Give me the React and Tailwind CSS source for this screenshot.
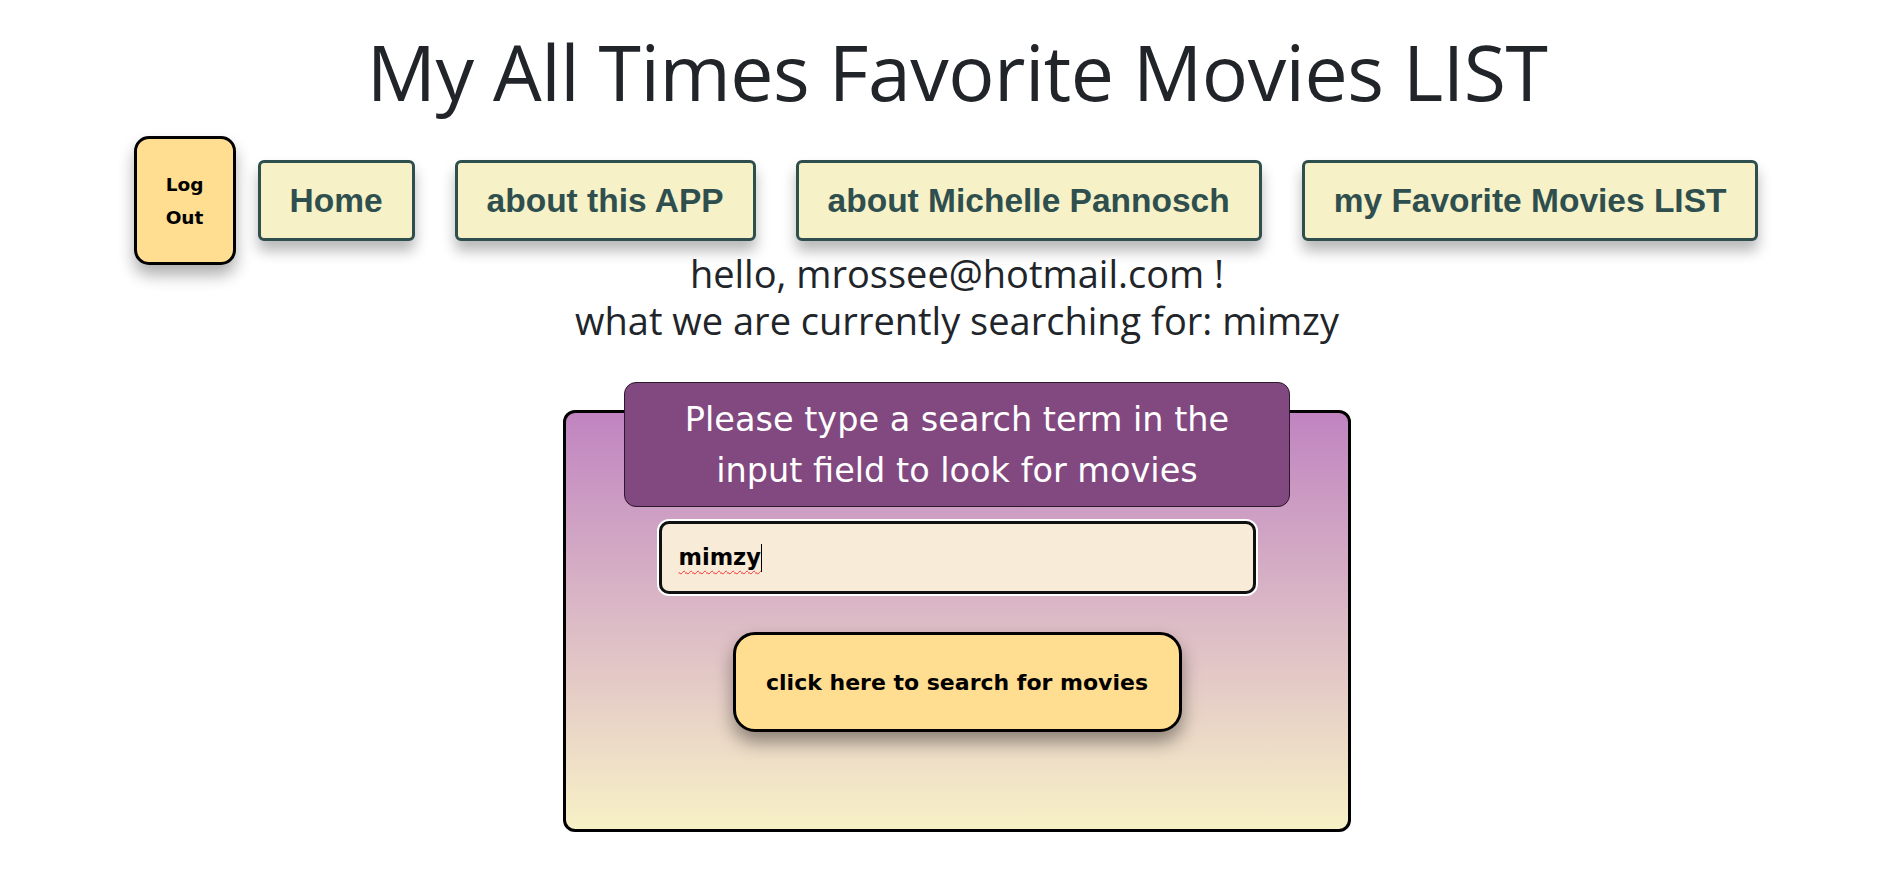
import { useState } from 'react';

const navLinks = ['Home', 'about this APP', 'about Michelle Pannosch', 'my Favorite Movies LIST'];

const App = () => {
  const [term] = useState('mimzy');

  return (
    <div className="bg-white min-h-screen text-[#212529] font-['Open_Sans',sans-serif]">
      {/* titel */}
      <h1 className="pl-[22px] pt-[26px] text-center text-[77px] leading-[1.2] font-medium tracking-[-0.5px]">
        My All Times Favorite Movies LIST
      </h1>

      {/* navigatie */}
      <nav className="mt-[18px] flex items-center justify-center gap-[40px]">
        <button className="-mr-[18px] w-[102px] h-[129px] rounded-[15px] border-[3px] border-black bg-[#ffdd91] shadow-[0_10px_16px_rgba(0,0,0,0.32)] font-['DejaVu_Sans',sans-serif] font-bold text-[18.5px] leading-[33px] text-black">
          Log<br />Out
        </button>
        {navLinks.map((l) => (
          <button
            key={l}
            className="h-[81px] px-[29px] rounded-[6px] border-[3px] border-[#2f4f4f] bg-[#f6f1c7] shadow-[0_10px_14px_rgba(0,0,0,0.28)] font-['Liberation_Sans',sans-serif] font-bold text-[33.5px] text-[#2f4f4f] whitespace-nowrap"
          >
            {l}
          </button>
        ))}
      </nav>

      {/* begroeting */}
      <div className="pl-[22px] text-center text-[38px] leading-[47px] -mt-[15px]">
        <p>hello, mrossee@hotmail.com !</p>
        <p>what we are currently searching for: {term}</p>
      </div>

      {/* zoekvak */}
      <div className="pl-[22px] flex justify-center mt-[66px]">
        <div className="w-[788px] h-[422px] rounded-[12px] border-[3px] border-black bg-gradient-to-b from-[#c084c0] to-[#f7f1c6] flex flex-col items-center">
          <div className="-mt-[31px] w-[666px] h-[125px] rounded-[12px] border border-[#2a1a2a] bg-[#824880] flex items-center justify-center text-center text-white font-['DejaVu_Sans',sans-serif] text-[33.5px] leading-[51px]">
            <p>Please type a search term in the<br />input field to look for movies</p>
          </div>

          <div className="mt-[12px] rounded-[12px] border-2 border-white">
            <div className="w-[597px] h-[73px] rounded-[10px] border-[3px] border-[#111] bg-[#f8ebd7] flex items-center px-[17px]">
              <span className="font-['DejaVu_Sans',sans-serif] font-bold text-[22.5px] text-black underline decoration-wavy decoration-red-500 decoration-1 underline-offset-[5px]">{term}</span>
              <span className="w-[1px] h-[28px] bg-black" />
            </div>
          </div>

          <button className="mt-[36px] w-[449px] h-[100px] rounded-[22px] border-[3px] border-black bg-[#ffdd91] shadow-[0_10px_18px_rgba(0,0,0,0.4)] font-['DejaVu_Sans',sans-serif] font-bold text-[22px] text-black">
            click here to search for movies
          </button>
        </div>
      </div>
    </div>
  );
};

export default App;
